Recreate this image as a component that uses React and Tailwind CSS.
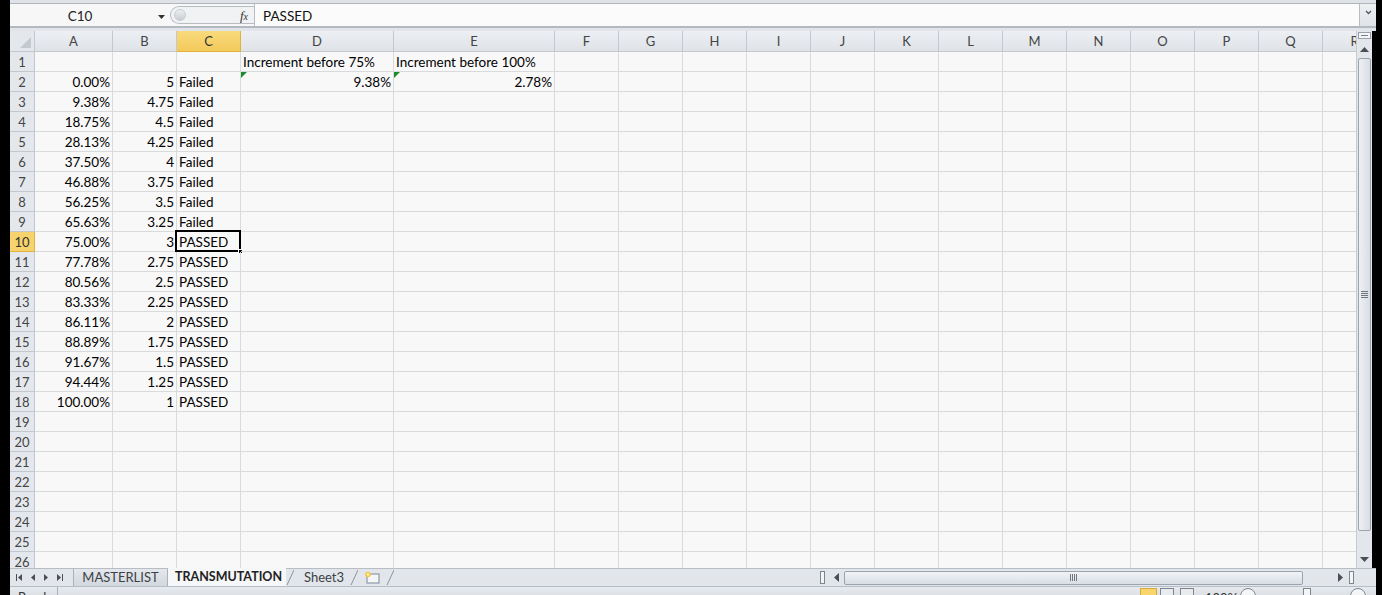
import React from "react";

const FONT = { fontFamily: "Lato, 'Open Sans', 'Liberation Sans', sans-serif" };

const COLS = [
  { n: "A", w: 78 }, { n: "B", w: 64 }, { n: "C", w: 64 }, { n: "D", w: 153 }, { n: "E", w: 161 },
  { n: "F", w: 64 }, { n: "G", w: 64 }, { n: "H", w: 64 }, { n: "I", w: 64 }, { n: "J", w: 64 },
  { n: "K", w: 64 }, { n: "L", w: 64 }, { n: "M", w: 64 }, { n: "N", w: 64 }, { n: "O", w: 64 },
  { n: "P", w: 64 }, { n: "Q", w: 64 }, { n: "R", w: 64 },
];

const A = ["0.00%", "9.38%", "18.75%", "28.13%", "37.50%", "46.88%", "56.25%", "65.63%", "75.00%", "77.78%", "80.56%", "83.33%", "86.11%", "88.89%", "91.67%", "94.44%", "100.00%"];
const B = ["5", "4.75", "4.5", "4.25", "4", "3.75", "3.5", "3.25", "3", "2.75", "2.5", "2.25", "2", "1.75", "1.5", "1.25", "1"];

function cellData(r, c) {
  if (r === 1) {
    if (c === "D") return { t: "Increment before 75%", left: true };
    if (c === "E") return { t: "Increment before 100%", left: true };
    return null;
  }
  if (r === 2) {
    if (c === "D") return { t: "9.38%", tri: true };
    if (c === "E") return { t: "2.78%", tri: true };
  }
  if (r >= 2 && r <= 18) {
    const i = r - 2;
    if (c === "A") return { t: A[i] };
    if (c === "B") return { t: B[i] };
    if (c === "C") return { t: r < 10 ? "Failed" : "PASSED", left: true };
  }
  return null;
}

function GreenTri() {
  return (
    <svg className="absolute left-0 top-0" width="6" height="6" viewBox="0 0 6 6">
      <polygon points="0,0 6,0 0,6" fill="#1e8a2e" />
    </svg>
  );
}

function Row({ r }) {
  const sel = r === 10;
  return (
    <div className="flex h-[20px] shrink-0">
      <div
        className={`w-[25px] shrink-0 h-[20px] box-border border-r border-b text-[13px] leading-[20px] text-center ${
          sel ? "bg-[#f6d36c] border-[#e2b33b] text-[#333]" : "bg-[#e4e8ed] border-[#c3c8cf] text-[#444]"
        }`}
      >
        {r}
      </div>
      {COLS.map((c) => {
        const d = cellData(r, c.n);
        const isSel = r === 10 && c.n === "C";
        return (
          <div
            key={c.n}
            style={{ width: c.w }}
            className={`relative shrink-0 h-[20px] box-border border-r border-b border-[#d9dadb] text-[13.5px] leading-[20px] text-black whitespace-nowrap px-[2px] ${
              d && d.left ? "text-left" : "text-right"
            }`}
          >
            {d && d.tri && <GreenTri />}
            {d ? d.t : ""}
            {isSel && (
              <>
                <div className="absolute left-[-2px] top-[-2px] right-[-1px] bottom-[-1px] border-2 border-black" />
                <div className="absolute right-[-3px] bottom-[-3px] w-[5px] h-[5px] bg-black border border-white" />
              </>
            )}
          </div>
        );
      })}
    </div>
  );
}

function HeaderRow() {
  return (
    <div className="flex h-[21px] shrink-0">
      <div className="relative w-[25px] shrink-0 h-[21px] box-border border-r border-b border-[#c3c8cf] bg-[#e4e8ed]">
        <svg className="absolute right-[3px] bottom-[3px]" width="11" height="11" viewBox="0 0 11 11">
          <polygon points="11,0 11,11 0,11" fill="#c4c9d0" />
        </svg>
      </div>
      {COLS.map((c) => {
        const sel = c.n === "C";
        return (
          <div
            key={c.n}
            style={{ width: c.w }}
            className={`shrink-0 h-[21px] box-border border-r border-b text-[13px] leading-[21px] text-center ${
              sel
                ? "bg-gradient-to-b from-[#f9db7c] to-[#f3c95a] border-[#e2b33b] text-[#333]"
                : "bg-gradient-to-b from-[#eceff3] to-[#dfe3e8] border-[#c3c8cf] text-[#444]"
            }`}
          >
            {c.n}
          </div>
        );
      })}
    </div>
  );
}

function VScroll() {
  return (
    <div className="w-[16px] shrink-0 bg-[#e3e6ea] border-l border-[#c7ccd2] flex flex-col items-center">
      <div className="w-[13px] h-[7px] mt-[1px] border border-[#9aa1aa] bg-[#f4f5f7] flex items-center justify-center">
        <div className="w-[7px] h-[1px] bg-[#7b828c]" />
      </div>
      <div className="h-[13px] mt-[4px] flex items-center justify-center">
        <svg width="9" height="5" viewBox="0 0 9 5"><polygon points="4.5,0 9,5 0,5" fill="#4a4f57" /></svg>
      </div>
      <div className="w-[13px] h-[473px] mt-[2px] rounded-[2px] border border-[#9aa3ae] bg-gradient-to-r from-[#eef0f3] to-[#d9dde3] flex items-center justify-center">
        <div className="flex flex-col gap-[1px]">
          <div className="w-[7px] h-[1px] bg-[#6f7680]" />
          <div className="w-[7px] h-[1px] bg-[#6f7680]" />
          <div className="w-[7px] h-[1px] bg-[#6f7680]" />
          <div className="w-[7px] h-[1px] bg-[#6f7680]" />
        </div>
      </div>
      <div className="flex-1" />
      <div className="h-[14px] mb-[2px] flex items-center justify-center">
        <svg width="9" height="5" viewBox="0 0 9 5"><polygon points="0,0 9,0 4.5,5" fill="#4a4f57" /></svg>
      </div>
    </div>
  );
}

function NavArrows() {
  const c = "#4a4f57";
  return (
    <div className="w-[63px] shrink-0 flex items-center gap-[9px] pl-[6px]">
      <svg width="6" height="7" viewBox="0 0 6 7"><rect x="0" y="0" width="1" height="7" fill={c} /><polygon points="6,0 6,7 2,3.5" fill={c} /></svg>
      <svg width="4" height="7" viewBox="0 0 4 7"><polygon points="4,0 4,7 0,3.5" fill={c} /></svg>
      <svg width="4" height="7" viewBox="0 0 4 7"><polygon points="0,0 0,7 4,3.5" fill={c} /></svg>
      <svg width="6" height="7" viewBox="0 0 6 7"><polygon points="0,0 0,7 4,3.5" fill={c} /><rect x="5" y="0" width="1" height="7" fill={c} /></svg>
    </div>
  );
}

function Slash() {
  return (
    <svg width="8" height="17" viewBox="0 0 8 17" className="shrink-0">
      <line x1="1" y1="16" x2="8" y2="1" stroke="#8c939c" strokeWidth="1" />
    </svg>
  );
}

function TabBar() {
  return (
    <div className="h-[18px] shrink-0 flex bg-[#e2e6eb] border-t border-[#b7bdc5]">
      <NavArrows />
      <div className="flex items-stretch text-[13px] text-[#3b3f45]">
        <div className="w-[95px] bg-gradient-to-b from-[#e4e7eb] to-[#d3d8de] border-l border-r border-[#aab1ba] flex items-center justify-center leading-none">
          MASTERLIST
        </div>
        <div className="w-[118px] bg-[#f6f7f8] flex items-center justify-center font-bold text-[#222] leading-none mt-[-1px] text-[12.5px] pl-[3px]">
          TRANSMUTATION
        </div>
        <Slash />
        <div className="w-[56px] flex items-center justify-center leading-none pl-[4px]">Sheet3</div>
        <Slash />
        <div className="w-[28px] flex items-center justify-center">
          <svg width="16" height="13" viewBox="0 0 16 13">
            <rect x="3" y="3" width="12" height="9" fill="#f3f5f8" stroke="#7c8796" strokeWidth="1" />
            <circle cx="4" cy="3.5" r="2.8" fill="#f5c842" />
            <circle cx="4" cy="3.5" r="1.2" fill="#fff4c0" />
          </svg>
        </div>
        <Slash />
      </div>
      <div className="flex-1" />
      <div className="w-[539px] shrink-0 flex items-center">
        <div className="w-[5px] h-[13px] border border-[#7e858f] bg-[#f4f5f7] ml-[3px]" />
        <div className="w-[14px] flex items-center justify-center ml-[4px]">
          <svg width="5" height="9" viewBox="0 0 5 9"><polygon points="5,0 5,9 0,4.5" fill="#4a4f57" /></svg>
        </div>
        <div className="w-[459px] h-[14px] ml-[1px] rounded-[2px] border border-[#9aa3ae] bg-gradient-to-b from-[#f1f3f5] to-[#d9dee4] flex items-center justify-center">
          <div className="flex gap-[1px]">
            <div className="w-[1px] h-[7px] bg-[#6f7680]" />
            <div className="w-[1px] h-[7px] bg-[#6f7680]" />
            <div className="w-[1px] h-[7px] bg-[#6f7680]" />
            <div className="w-[1px] h-[7px] bg-[#6f7680]" />
          </div>
        </div>
        <div className="flex-1" />
        <div className="w-[14px] flex items-center justify-center">
          <svg width="5" height="9" viewBox="0 0 5 9"><polygon points="0,0 0,9 5,4.5" fill="#4a4f57" /></svg>
        </div>
        <div className="w-[5px] h-[13px] border border-[#7e858f] bg-[#f4f5f7] mr-[2px] ml-[2px]" />
      </div>
      <div className="w-[20px] shrink-0 bg-[#e3e6ea]" />
    </div>
  );
}

function StatusBar() {
  return (
    <div className="h-[9px] shrink-0 overflow-hidden flex bg-gradient-to-b from-[#e7eaee] to-[#dde1e6] border-t border-[#b7bdc5]">
      <div className="w-[48px] pl-[8px] text-[13px] leading-none pt-[4px] text-[#333] border-r border-[#a9b0b9]">Ready</div>
      <div className="flex-1" />
      <div className="flex items-start pt-[1px]">
        <div className="w-[17px] h-[14px] bg-[#f8d66c] border border-[#d9a93a]" />
        <div className="w-[14px] h-[14px] border border-[#7e858f] bg-[#e9ecef] ml-[3px]" />
        <div className="w-[14px] h-[14px] border border-[#7e858f] bg-[#e9ecef] ml-[6px]" />
        <div className="w-[27px] text-[13px] leading-none pt-[4px] ml-[11px] text-[#333]">100%</div>
        <div className="w-[16px] h-[16px] rounded-full border border-[#7e858f] bg-[#f4f5f7] ml-[8px]" />
        <div className="w-[8px] h-[14px] border border-[#7e858f] bg-[#f4f5f7] ml-[47px]" />
        <div className="w-[16px] h-[16px] rounded-full border border-[#7e858f] bg-[#f4f5f7] ml-[39px]" />
      </div>
      <div className="w-[10px]" />
    </div>
  );
}

export default function App() {
  const rows = [];
  for (let r = 1; r <= 27; r++) rows.push(r);
  return (
    <div className="w-[1382px] h-[595px] bg-black flex overflow-hidden" style={FONT}>
      <div className="w-[10px] shrink-0 bg-black" />
      <div className="w-[1366px] shrink-0 flex flex-col bg-[#e1e5ea]">
        <div className="h-[4px] shrink-0 bg-[#dfe3e8] border-b border-[#b0b6be]" />
        <div className="h-[24px] shrink-0 flex bg-[#f7f7f7] border-b-2 border-[#b3b9c1]">
          <div className="w-[160px] shrink-0 flex items-center relative">
            <div className="flex-1 text-center text-[13.5px] text-[#222] pr-[20px] pt-[3px]">C10</div>
            <svg className="absolute right-[5px] top-[11px]" width="7" height="4" viewBox="0 0 7 4"><polygon points="0,0 7,0 3.5,4" fill="#333" /></svg>
          </div>
          <div className="w-[84px] shrink-0 flex items-center my-[2px] rounded-l-full border border-r-0 border-[#b8bdc4] bg-[#f1f2f4]">
            <div className="w-[12px] h-[12px] ml-[3px] rounded-full border border-[#c9ccd1] bg-gradient-to-b from-[#eceef0] to-[#c9cdd2]" />
            <div className="flex-1" />
            <span className="italic text-[13px] text-[#333] mr-[6px] pt-[2px]" style={{ fontFamily: "'Liberation Serif', serif" }}>
              f<span className="text-[10px]">x</span>
            </span>
          </div>
          <div className="w-[1px] bg-[#b8bdc4] shrink-0" />
          <div className="flex-1 flex items-center pl-[8px] pt-[3px] text-[13.5px] text-[#111] bg-[#fbfbfb]">PASSED</div>
          <div className="w-[17px] shrink-0 border-l border-[#b8bdc4] bg-gradient-to-b from-[#eef0f3] to-[#dfe3e8] flex items-start justify-center pt-[6px]">
            <svg width="7" height="5" viewBox="0 0 7 5"><polyline points="1,1 3.5,3.5 6,1" fill="none" stroke="#555" strokeWidth="1.3" /></svg>
          </div>
        </div>
        <div className="h-[3px] shrink-0 bg-[#e1e5ea]" />
        <div className="h-[537px] shrink-0 flex">
          <div className="w-[1346px] shrink-0 overflow-hidden bg-[#f8f8f8] flex flex-col">
            <HeaderRow />
            {rows.map((r) => (
              <Row key={r} r={r} />
            ))}
          </div>
          <VScroll />
          <div className="w-[4px] shrink-0 bg-black" />
        </div>
        <TabBar />
        <StatusBar />
      </div>
      <div className="flex-1 bg-black" />
    </div>
  );
}
